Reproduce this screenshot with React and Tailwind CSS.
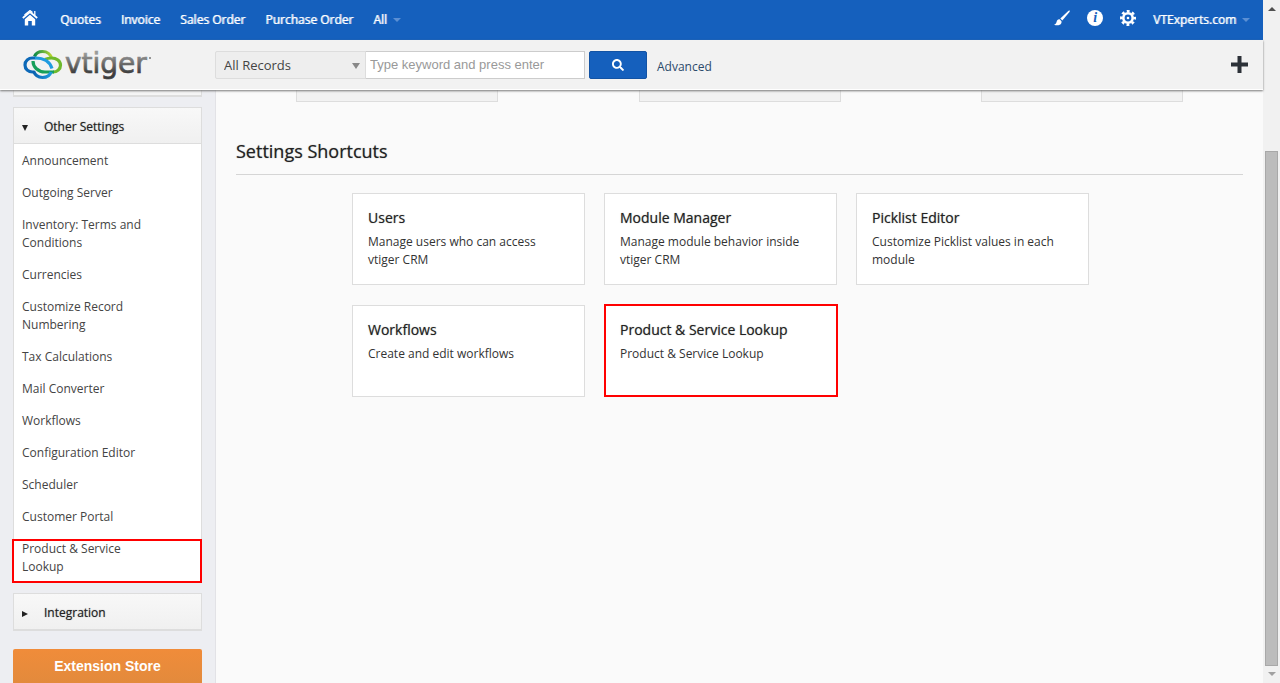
import React from "react";
import { FaSearch } from "react-icons/fa";

const modules = ["Quotes", "Invoice", "Sales Order", "Purchase Order"];

const settings = [
  "Announcement",
  "Outgoing Server",
  "Inventory: Terms and Conditions",
  "Currencies",
  "Customize Record Numbering",
  "Tax Calculations",
  "Mail Converter",
  "Workflows",
  "Configuration Editor",
  "Scheduler",
  "Customer Portal",
];

const shortcuts = [
  { title: "Users", text: "Manage users who can access vtiger CRM" },
  { title: "Module Manager", text: "Manage module behavior inside vtiger CRM" },
  { title: "Picklist Editor", text: "Customize Picklist values in each module" },
  { title: "Workflows", text: "Create and edit workflows" },
  { title: "Product & Service Lookup", text: "Product & Service Lookup", marked: true },
];

function Caret() {
  return <span className="border-x-4 border-t-4 border-x-transparent border-t-[#5b8fd4]" />;
}

function HomeIcon() {
  return (
    <svg viewBox="0 0 16 16" className="h-4 w-4" fill="none" stroke="#fff">
      <path d="M.8 8 8 2l7.200 6" strokeWidth="1.800" />
      <path d="M2.500 5 8 .6l2.500 2M12.800 1v4.500" strokeWidth="1.300" />
      <path d="M8 4.800 2.800 9.200V15.500h3.400v-4.500h3.600v4.500h3.400V9.200z" fill="#fff" stroke="none" />
    </svg>
  );
}

function BrushIcon() {
  return (
    <svg viewBox="0 0 16 16" className="h-4 w-4" fill="#fff">
      <path d="M16 .5 14.500.8 6.300 8.400l2 2.200L15.500 2z" />
      <path d="M5.600 9.200c-1.800-.2-2.600.8-2.900 2.300-.3 1.600-1 2.700-2.700 3.300 3 1 6.500.6 7.300-1.500.3-.8.3-1.400.2-2z" />
    </svg>
  );
}

function GearIcon() {
  return (
    <svg viewBox="-8 -8 16 16" className="h-4 w-4" fill="none" stroke="#fff">
      <circle r="4.700" strokeWidth="2.600" />
      <circle r="6.700" strokeWidth="2.600" strokeDasharray="2.800 2.462" strokeDashoffset="1.400" />
      <circle r="1.300" fill="#fff" stroke="none" />
    </svg>
  );
}

function PlusIcon() {
  return (
    <svg viewBox="0 0 17 17" className="h-[17px] w-[17px]" fill="#2c3138">
      <path d="M6.500 0h4v6.500H17v4h-6.500V17h-4v-6.500H0v-4h6.500z" />
    </svg>
  );
}

function Logo() {
  return (
    <svg viewBox="0 -4 130 40" className="h-10 w-[130px]" role="img" aria-label="vtiger">
      <defs>
        <linearGradient id="green" x1="0" y1="0" x2="1" y2="0">
          <stop offset="0" stopColor="#0d8a4a" />
          <stop offset="1" stopColor="#b9d530" />
        </linearGradient>
        <linearGradient id="blue" x1="0" y1="0" x2="1" y2="0">
          <stop offset="0" stopColor="#0a62b0" />
          <stop offset="1" stopColor="#1f9be0" />
        </linearGradient>
        <linearGradient id="grey" x1="0" y1="0" x2="0" y2="1">
          <stop offset="0.2" stopColor="#999" />
          <stop offset="0.8" stopColor="#3c3c3c" />
        </linearGradient>
      </defs>
      <g fill="none" strokeWidth="3.200">
        <path d="M11.500 7.500C13 4 16 2.500 19.500 2.500c4.500 0 8.200 2.800 9.200 7" stroke="url(#green)" />
        <path d="M22 10.500c2-1 4-1.500 6.500-1.500 5 0 9 3 9 7.200 0 4-3.500 6.800-7.500 6.800" stroke="#6fb92c" />
        <path d="M10 12c0 6 5 11 12 11h9" stroke="#17a05a" />
        <path d="M11 23H9.500C5.500 23 2 20.300 2 16s3.500-7 7.500-7h3" stroke="#0d69b8" />
        <path d="M12 9c9 0 15 4 17 10.500" stroke="#1f9be0" />
        <path d="M10.500 22c1.500 4 5 6.500 9 6.500s7.500-2.200 8.500-5.500" stroke="url(#blue)" />
      </g>
      <text
        x="42"
        y="24"
        fontSize="28"
        fontFamily="DejaVu Sans, sans-serif"
        fill="url(#grey)"
        stroke="url(#grey)"
        strokeWidth="0.7"
      >
        vtiger
      </text>
      <circle cx="127" cy="9" r="1" fill="#777" />
    </svg>
  );
}

function TopBar() {
  return (
    <nav className="flex h-10 shrink-0 items-center bg-[#1560bd] pl-[22px] pr-[13px] font-medium text-white">
      <a href="#home" aria-label="Home" className="mr-[22px] -mt-1">
        <HomeIcon />
      </a>
      <div className="flex flex-1 items-center gap-5">
        {modules.map((name) => (
          <a key={name} href="#module" className="[text-shadow:1px_0_0_#ffffffaa]">{name}</a>
        ))}
        <button className="flex items-center gap-1.5 [text-shadow:1px_0_0_#ffffffaa]">All <Caret /></button>
      </div>
      <div className="flex items-center gap-[17px]">
        <button aria-label="Theme" className="-mt-1"><BrushIcon /></button>
        <button
          aria-label="Info"
          className="-mt-1 h-4 w-4 rounded-full bg-white text-center font-['Liberation_Serif',serif] text-sm leading-4 font-bold text-[#1560bd] italic"
        >
          i
        </button>
        <button aria-label="Settings" className="-mt-1"><GearIcon /></button>
        <button className="flex items-center gap-1.5 [text-shadow:1px_0_0_#ffffffaa]">VTExperts.com <Caret /></button>
      </div>
    </nav>
  );
}

function SearchBar() {
  return (
    <header className="relative z-10 flex h-[50px] shrink-0 items-center border-b border-white bg-[#f2f2f2] pl-[23px] pr-[15px] shadow-[0_1px_2px_#777]">
      <a href="#home" className="w-48"><Logo /></a>
      <form className="flex flex-1 items-center">
        <div className="relative">
          <select
            aria-label="Search in"
            className="h-7 w-[151px] appearance-none rounded-l-xs border border-[#ddd] bg-[#eee] px-2 text-[13px] text-[#444]"
          >
            <option>All Records</option>
          </select>
          <span className="pointer-events-none absolute right-1.5 top-3 border-x-4 border-t-[6px] border-x-transparent border-t-[#888]" />
        </div>
        <input
          type="text"
          aria-label="Keyword"
          placeholder="Type keyword and press enter"
          className="-ml-px h-7 w-[220px] border border-[#ccc] bg-white px-1 font-['Liberation_Sans',sans-serif] text-[13px] placeholder:text-[#999]"
        />
        <button
          type="button"
          aria-label="Search"
          className="ml-1 flex h-7 w-[58px] items-center justify-center rounded-xs border border-[#1253a4] bg-[#1560bd] text-white"
        >
          <FaSearch size={12} />
        </button>
        <a href="#advanced" className="ml-2.5 pt-1 text-[#2c4a6b]">Advanced</a>
      </form>
      <button aria-label="Quick create"><PlusIcon /></button>
    </header>
  );
}

function Sidebar() {
  return (
    <aside className="w-[216px] shrink-0 border-r border-[#e2e2e6] bg-[#edeef2] px-[13px] text-[#444]">
      <div className="h-[7px] border border-t-0 border-b-2 border-[#ddd] bg-[#f5f5f5]" />
      <section className="mt-2.5 border border-[#ddd] bg-white">
        <button className="flex h-9 w-full items-center border-b border-[#ddd] bg-linear-to-b from-[#f8f8f8] to-[#f0f0f0] pl-2 pt-0.5 font-medium text-[#222] [text-shadow:0_0_1px_#2228]">
          <span className="mt-0.5 mr-4 border-x-[3px] border-t-[6px] border-x-transparent border-t-[#222]" />
          Other Settings
        </button>
        <ul>
          {settings.map((name) => (
            <li key={name} className="pt-2 pb-1.5 pl-2 pr-12">
              <a href="#setting" className="block">{name}</a>
            </li>
          ))}
        </ul>
        <div className="-mr-px -mb-px -ml-0.5 mt-[7px] border-2 border-[#f00] pb-[5px] pl-2 pr-16">
          <a href="#lookup" className="-mt-px block">Product &amp; Service Lookup</a>
        </div>
      </section>
      <button className="mt-2.5 flex h-[38px] w-full items-center border border-b-2 border-[#ddd] bg-linear-to-b from-[#f8f8f8] to-[#f0f0f0] pl-2 pt-0.5 font-medium text-[#222] [text-shadow:0_0_1px_#2228]">
        <span className="mt-0.5 mr-4 border-y-[3px] border-l-[6px] border-y-transparent border-l-[#222]" />
        Integration
      </button>
      <button className="mt-[18px] h-9 w-full rounded-xs bg-linear-to-b from-[#f08c3a] to-[#e28a3c] pb-0.5 font-['Liberation_Sans',sans-serif] text-sm font-bold text-white">
        Extension Store
      </button>
    </aside>
  );
}

function Shortcut({ title, text, marked }) {
  return (
    <a
      href="#shortcut"
      className={
        marked
          ? "-mt-px -mr-px block h-[93px] border-2 border-[#f00] bg-white px-3.5 pt-3.5"
          : "block h-[92px] border border-[#ddd] bg-white px-[15px] pt-3.5"
      }
    >
      <h3 className="mb-[5px] text-sm font-medium leading-5 text-[#222] [text-shadow:0_0_1px_#2228]">{title}</h3>
      <p>{text}</p>
    </a>
  );
}

function Content() {
  return (
    <main className="min-w-0 flex-1 bg-[#fafafa] px-5 text-[#333]">
      <div className="flex justify-between px-[60px]">
        {[1, 2, 3].map((n) => (
          <div key={n} className="h-3 w-[202px] border border-t-0 border-[#ddd] bg-[#f2f2f2]" />
        ))}
      </div>
      <h2 className="mt-[33px] border-b border-[#d5d5d5] pb-[7px] text-lg font-medium leading-8 text-[#222] [text-shadow:0_0_1px_#2228]">
        Settings Shortcuts
      </h2>
      <div className="mt-[18px] ml-[116px] grid max-w-[737px] grid-cols-3 gap-x-[19px] gap-y-5">
        {shortcuts.map((item) => (
          <Shortcut key={item.title} {...item} />
        ))}
      </div>
    </main>
  );
}

function Scrollbar() {
  return (
    <div className="flex w-[17px] shrink-0 flex-col items-center bg-[#f1f1f1]" aria-hidden="true">
      <span className="mt-[7px] border-x-4 border-b-4 border-x-transparent border-b-[#505050]" />
      <div className="mt-[140px] w-[13px] flex-1 border border-[#a8a8a8] bg-[#bcbcbc]" />
      <span className="mt-1.5 mb-[7px] border-x-4 border-t-4 border-x-transparent border-t-[#a0a0a0]" />
    </div>
  );
}

export default function App() {
  return (
    <div className="flex h-screen overflow-hidden font-['Open_Sans',sans-serif] text-xs leading-[18px]">
      <div className="flex min-w-0 flex-1 flex-col">
        <TopBar />
        <SearchBar />
        <div className="flex min-h-0 flex-1">
          <Sidebar />
          <Content />
        </div>
      </div>
      <Scrollbar />
    </div>
  );
}
